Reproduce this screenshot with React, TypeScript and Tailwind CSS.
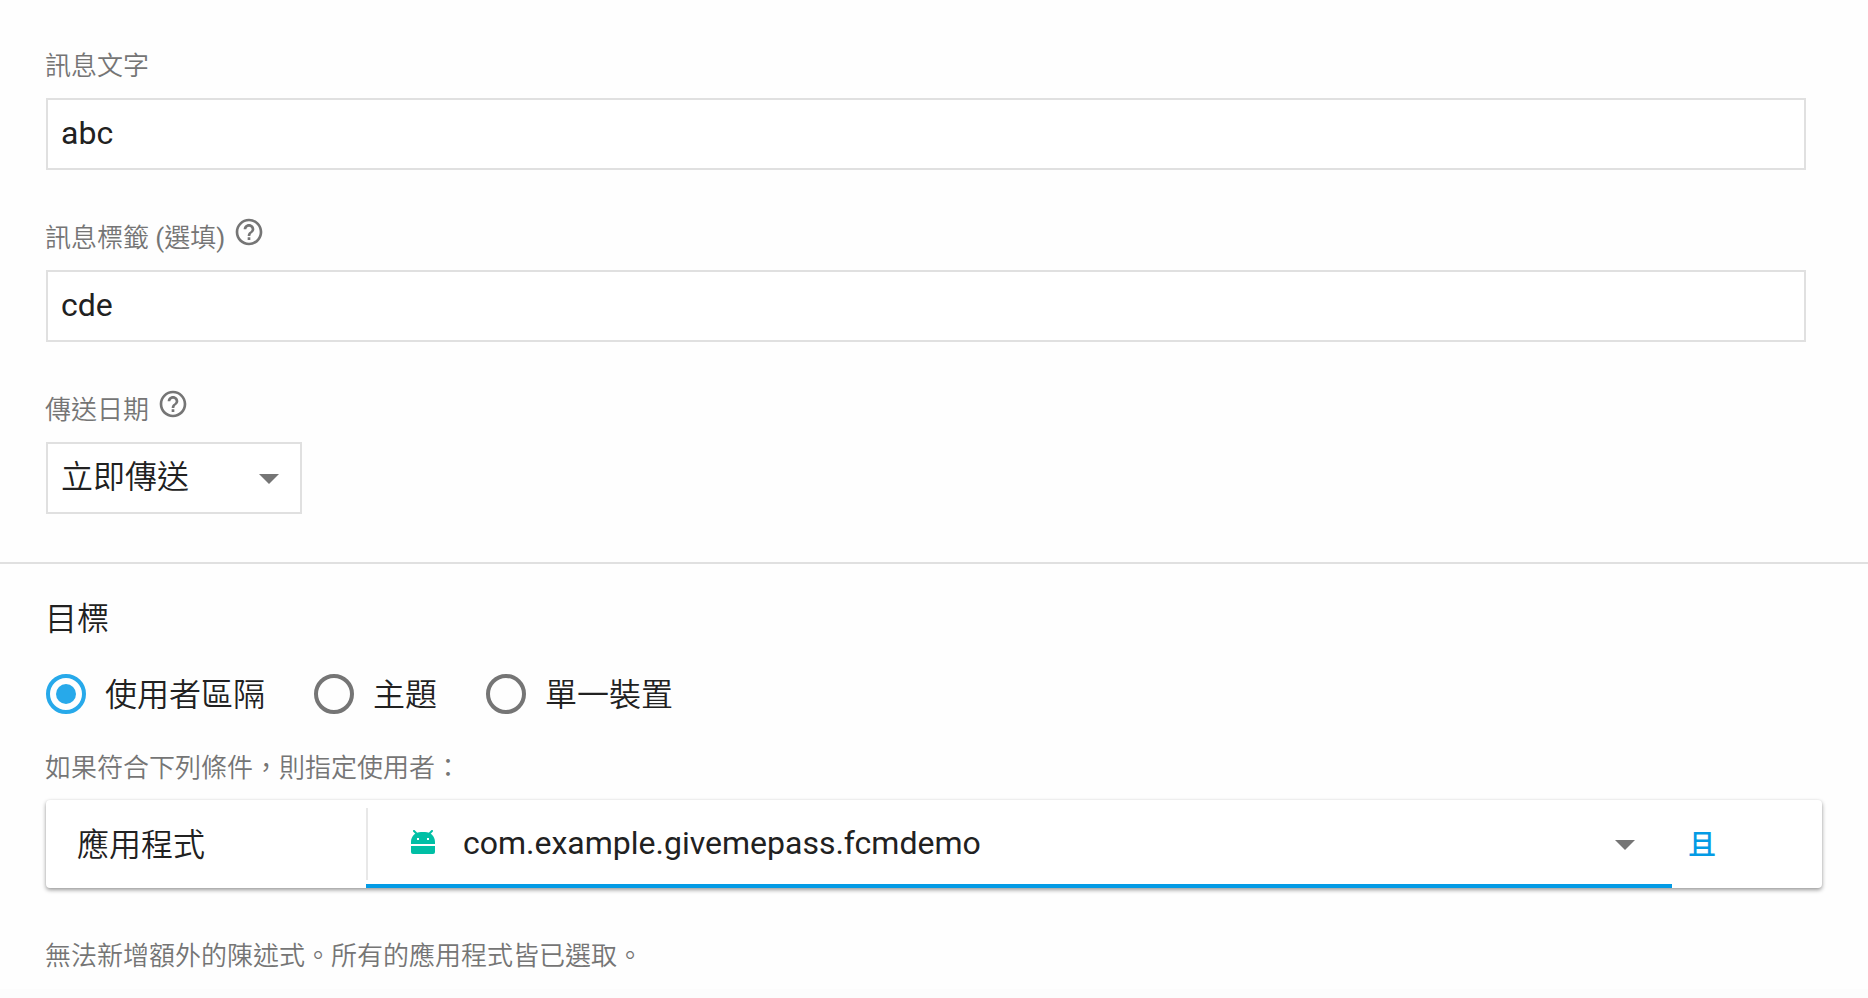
import React from "react";

function HelpIcon() {
  return (
    <svg viewBox="0 0 24 24" className="size-8 shrink-0 fill-[#757575]">
      <path d="M11 18h2v-2h-2v2zm1-16C6.48 2 2 6.48 2 12s4.480 10 10 10 10-4.480 10-10S17.520 2 12 2zm0 18c-4.410 0-8-3.590-8-8s3.590-8 8-8 8 3.590 8 8-3.590 8-8 8zm0-14c-2.210 0-4 1.790-4 4h2c0-1.100.900-2 2-2s2 .900 2 2c0 2-3 1.750-3 5h2c0-2.250 3-2.500 3-5 0-2.210-1.790-4-4-4z" />
    </svg>
  );
}

function ArrowDown() {
  return (
    <svg viewBox="0 0 24 24" className="size-12 shrink-0 fill-[#757575]">
      <path d="M7 10l5 5 5-5z" />
    </svg>
  );
}

function AndroidIcon() {
  return (
    <svg viewBox="0 0 24 24" className="mb-1 size-6 shrink-0">
      <path d="M3 1l4 4M21 1l-4 4" stroke="#00bfa5" strokeWidth="2" strokeLinecap="round" />
      <path
        fill="#00bfa5"
        fillRule="evenodd"
        d="M0 14v-2C0 6 4.500 2 10 2h4c5.500 0 10 4 10 10v2zM6 8v2h2V8zM16 8v2h2V8z"
      />
      <path fill="#00bfa5" d="M0 16h24v6a2 2 0 0 1-2 2H2a2 2 0 0 1-2-2z" />
    </svg>
  );
}

function Field({ label, help, children }: { label: React.ReactNode; help?: boolean; children: React.ReactNode }) {
  return (
    <div className="h-[172px]">
      <div className="-ml-px flex h-[62px] items-start text-[26px] leading-[38px] font-[350] text-[#757575]">
        <span className="pt-[11px]">{label}</span>
        {help && (
          <span className="ml-[8px] pt-2">
            <HelpIcon />
          </span>
        )}
      </div>
      {children}
    </div>
  );
}

function TextInput({ value }: { value: string }) {
  return (
    <div className="flex h-[72px] w-[1760px] items-center border-2 border-[#e0e0e0] bg-white px-[13px] pb-0.5">
      <span className="leading-[48px]">{value}</span>
    </div>
  );
}

function Radio({ label, checked }: { label: string; checked?: boolean }) {
  return (
    <div className="flex items-center gap-[19px]">
      <span
        className={
          checked
            ? "flex size-10 items-center justify-center rounded-full border-4 border-[#27a9ea]"
            : "size-10 rounded-full border-4 border-[#757575]"
        }
      >
        {checked && <span className="size-5 rounded-full bg-[#27a9ea]" />}
      </span>
      <span className="pt-0.5 leading-[46px]">{label}</span>
    </div>
  );
}

export default function App() {
  return (
    <div
      lang="zh-TW"
      className="flex h-[998px] w-[1868px] flex-col overflow-hidden bg-[#fefefe] font-['Roboto','Noto_Sans_CJK_TC',sans-serif] text-[32px] text-[#212121]"
    >
      <section className="h-[564px] shrink-0 border-b-2 border-[#e0e0e0] px-[46px] pt-9">
        <Field label="訊息文字">
          <TextInput value="abc" />
        </Field>
        <Field
          label={
            <>
              訊息標籤 <span className="font-normal">(</span>選填<span className="font-normal">)</span>
            </>
          }
          help
        >
          <TextInput value="cde" />
        </Field>
        <Field label="傳送日期" help>
          <div className="flex h-[72px] w-64 items-center justify-between border-2 border-[#e0e0e0] bg-white pr-[7px] pl-[13px]">
            <span className="pb-0.5 leading-[48px] font-[350]">立即傳送</span>
            <ArrowDown />
          </div>
        </Field>
      </section>
      <section className="flex h-[425px] shrink-0 flex-col px-[46px] pt-[31px] font-[350]">
        <h2 className="-ml-px h-[75px] leading-[48px] font-[350]">目標</h2>
        <div className="flex h-12 gap-[49px]">
          <Radio label="使用者區隔" checked />
          <Radio label="主題" />
          <Radio label="單一裝置" />
        </div>
        <p className="-ml-px h-[82px] pt-[31px] text-[26px] leading-[38px] text-[#757575]">
          如果符合下列條件，則指定使用者：
        </p>
        <div className="flex h-[88px] w-[1776px] shrink-0 rounded-[4px] bg-white shadow-[0_2px_4px_rgba(0,0,0,0.4),0_0_2px_rgba(0,0,0,0.06)]">
          <div className="flex w-80 items-center pt-0.5 pl-[31px] leading-[48px]">應用程式</div>
          <div className="flex h-[88px] w-[1306px] flex-col justify-between pt-2">
            <div className="flex h-[72px] items-center border-l-2 border-[#e8e8e8] pr-[23px] pl-[43px]">
              <AndroidIcon />
              <span className="ml-7 flex-1 pb-0.5 leading-[48px] font-normal">com.example.givemepass.fcmdemo</span>
              <ArrowDown />
            </div>
            <div className="h-1 bg-[#039be5]" />
          </div>
          <div className="flex items-center pt-[3px] pl-4 text-[28px] font-medium text-[#039be5]">且</div>
        </div>
        <p className="mt-[49px] -ml-px text-[26px] leading-[38px] text-[#757575]">
          無法新增額外的陳述式。所有的應用程式皆已選取。
        </p>
      </section>
      <div className="flex-1 bg-[#fcfcfc]" />
    </div>
  );
}
